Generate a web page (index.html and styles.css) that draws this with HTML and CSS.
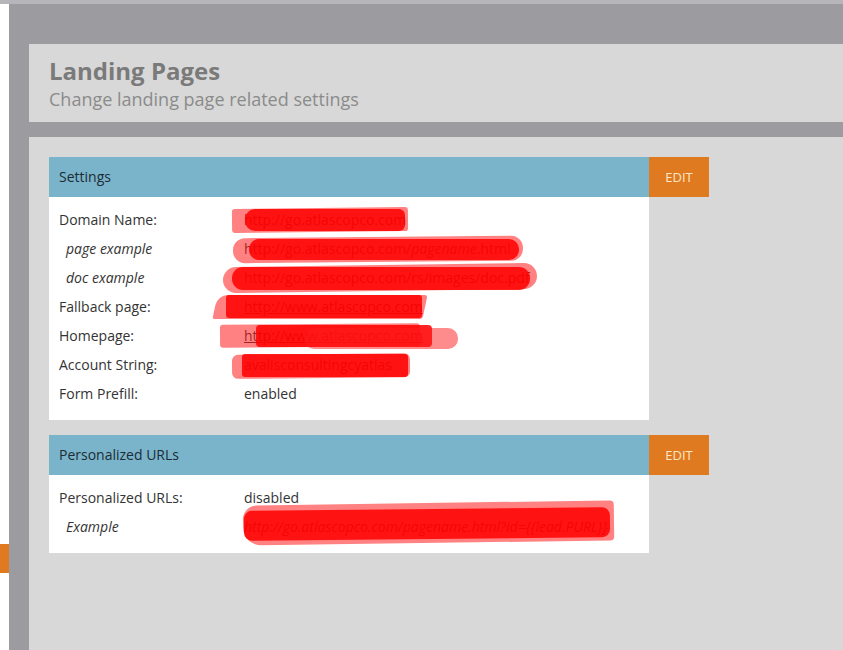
FILE: index.html
```html
<!DOCTYPE html>
<html>
<head>
<meta charset="utf-8">
<link rel="stylesheet" href="styles.css">
</head>
<body>
<div class="topbar"></div>
<div class="main">
  <div class="rail"><div class="rail-mark"></div></div>
  <div class="workspace">
    <div class="page-head">
      <div class="page-title">Landing Pages</div>
      <div class="page-sub">Change landing page related settings</div>
    </div>
    <div class="page-body">
      <div class="card">
        <div class="card-head">
          <div class="card-title">Settings</div>
          <div class="edit">EDIT</div>
        </div>
        <div class="card-body">
          <div class="row"><div class="label">Domain Name:</div><div class="value">http://go.atlascopco.com<span class="scrib s1"><i></i><b></b></span></div></div>
          <div class="row"><div class="label sub">page example</div><div class="value">http://go.atlascopco.com/<em>pagename</em>.html<span class="scrib s2"><i></i><b></b></span></div></div>
          <div class="row"><div class="label sub">doc example</div><div class="value">http://go.atlascopco.com/rs/images/doc.pdf<span class="scrib s3"><i></i><b></b></span></div></div>
          <div class="row"><div class="label">Fallback page:</div><div class="value"><span class="link">http://www.atlascopco.com</span><span class="scrib s4"><i></i><b></b></span></div></div>
          <div class="row"><div class="label">Homepage:</div><div class="value"><span class="link">http://www.atlascopco.com</span><span class="scrib s5"><i></i><b></b><u></u></span></div></div>
          <div class="row"><div class="label">Account String:</div><div class="value">avalisconsultingcyatlas<span class="scrib s6"><i></i><b></b></span></div></div>
          <div class="row"><div class="label">Form Prefill:</div><div class="value">enabled</div></div>
        </div>
      </div>
      <div class="card">
        <div class="card-head">
          <div class="card-title">Personalized URLs</div>
          <div class="edit">EDIT</div>
        </div>
        <div class="card-body">
          <div class="row"><div class="label">Personalized URLs:</div><div class="value">disabled</div></div>
          <div class="row"><div class="label sub">Example</div><div class="value ex">http://go.atlascopco.com/pagename.html?id={{lead.PURL}}<span class="scrib s7"><i></i><b></b></span></div></div>
        </div>
      </div>
    </div>
  </div>
</div>
</body>
</html>
```
FILE: styles.css
```css
* { box-sizing: border-box; }
html, body { margin: 0; padding: 0; }
body {
  background: #9c9ba0;
  font-family: "Open Sans", "Noto Sans", sans-serif;
  height: 650px;
  overflow: hidden;
}
.topbar { height: 4px; background: #b6b5b9; }
.main { display: flex; height: 646px; }
.rail { width: 9px; background: #ffffff; flex: none; }
.rail-mark { margin-top: 540px; height: 29px; background: #e07a20; }
.workspace {
  flex: 1;
  padding: 40px 0 0 20px;
  display: flex;
  flex-direction: column;
  gap: 15px;
}
.page-head {
  background: #d8d8d8;
  height: 78px;
  padding: 12px 20px 0 20px;
}
.page-title {
  font-size: 24px;
  line-height: 30px;
  font-weight: 700;
  color: #7a7a7a;
}
.page-sub {
  font-size: 18px;
  line-height: 24px;
  color: #8b8b8b;
  margin-top: 1px;
}
.page-body {
  flex: 1;
  background: #d8d8d8;
  padding: 20px 20px;
  display: flex;
  flex-direction: column;
  gap: 15px;
}
.card { width: 660px; }
.card-head { display: flex; height: 40px; }
.card-title {
  width: 600px;
  background: #79b4cb;
  color: #1d2b33;
  font-size: 14px;
  line-height: 40px;
  padding-left: 10px;
}
.edit {
  width: 60px;
  background: #e07a20;
  color: #fbe6c6;
  font-size: 13px;
  line-height: 40px;
  text-align: center;
}
.card-body {
  width: 600px;
  background: #ffffff;
  padding: 8px 0 12px 0;
}
.row {
  display: flex;
  height: 29px;
  line-height: 29px;
  font-size: 14px;
  color: #333333;
}
.label { width: 195px; padding-left: 10px; flex: none; }
.label.sub { padding-left: 17px; font-style: italic; }
.value { position: relative; white-space: nowrap; color: #333333; }
.value.ex { font-style: italic; }
.link { text-decoration: underline; }

/* red redaction scribbles over the values */
.scrib { position: absolute; left: 0; top: 0; pointer-events: none; }
.scrib i, .scrib b, .scrib u {
  position: absolute;
  display: block;
}
.scrib i { background: rgba(255, 25, 25, 0.55); }
.scrib b { background: rgba(255, 0, 0, 0.86); }
.scrib u { background: rgba(255, 25, 25, 0.5); }

.s1 i { left: -12px; top: 3px; width: 176px; height: 24px; border-radius: 3px; transform: rotate(-0.6deg); }
.s1 b { left: 1px; top: 4px; width: 160px; height: 22px; border-radius: 10px 6px 6px 10px; }

.s2 i { left: -11px; top: 3px; width: 290px; height: 25px; border-radius: 12px; transform: rotate(-0.5deg); }
.s2 b { left: 5px; top: 5px; width: 270px; height: 21px; border-radius: 10px; }

.s3 i { left: -21px; top: 2px; width: 314px; height: 26px; border-radius: 13px; transform: rotate(-0.8deg); }
.s3 b { left: -12px; top: 4px; width: 298px; height: 23px; border-radius: 11px; }

.s4 i { left: -29px; top: 3px; width: 210px; height: 24px; border-radius: 10px 3px 3px 2px; transform: skewX(-12deg); }
.s4 b { left: -18px; top: 3px; width: 196px; height: 23px; border-radius: 3px; }

.s5 i { left: -24px; top: 3px; width: 200px; height: 23px; border-radius: 3px; transform: rotate(-0.5deg); }
.s5 b { left: 12px; top: 4px; width: 176px; height: 22px; border-radius: 4px; }
.s5 u { left: 60px; top: 7px; width: 154px; height: 21px; border-radius: 10px; }

.s6 i { left: -12px; top: 4px; width: 178px; height: 24px; border-radius: 6px; transform: rotate(-0.6deg); }
.s6 b { left: -2px; top: 4px; width: 166px; height: 23px; border-radius: 3px; }

.s7 i { left: -1px; top: -9px; width: 371px; height: 40px; border-radius: 14px 4px 4px 18px; transform: rotate(-0.8deg); }
.s7 b { left: 0px; top: -3px; width: 366px; height: 30px; border-radius: 8px; transform: rotate(-0.6deg); }
```
